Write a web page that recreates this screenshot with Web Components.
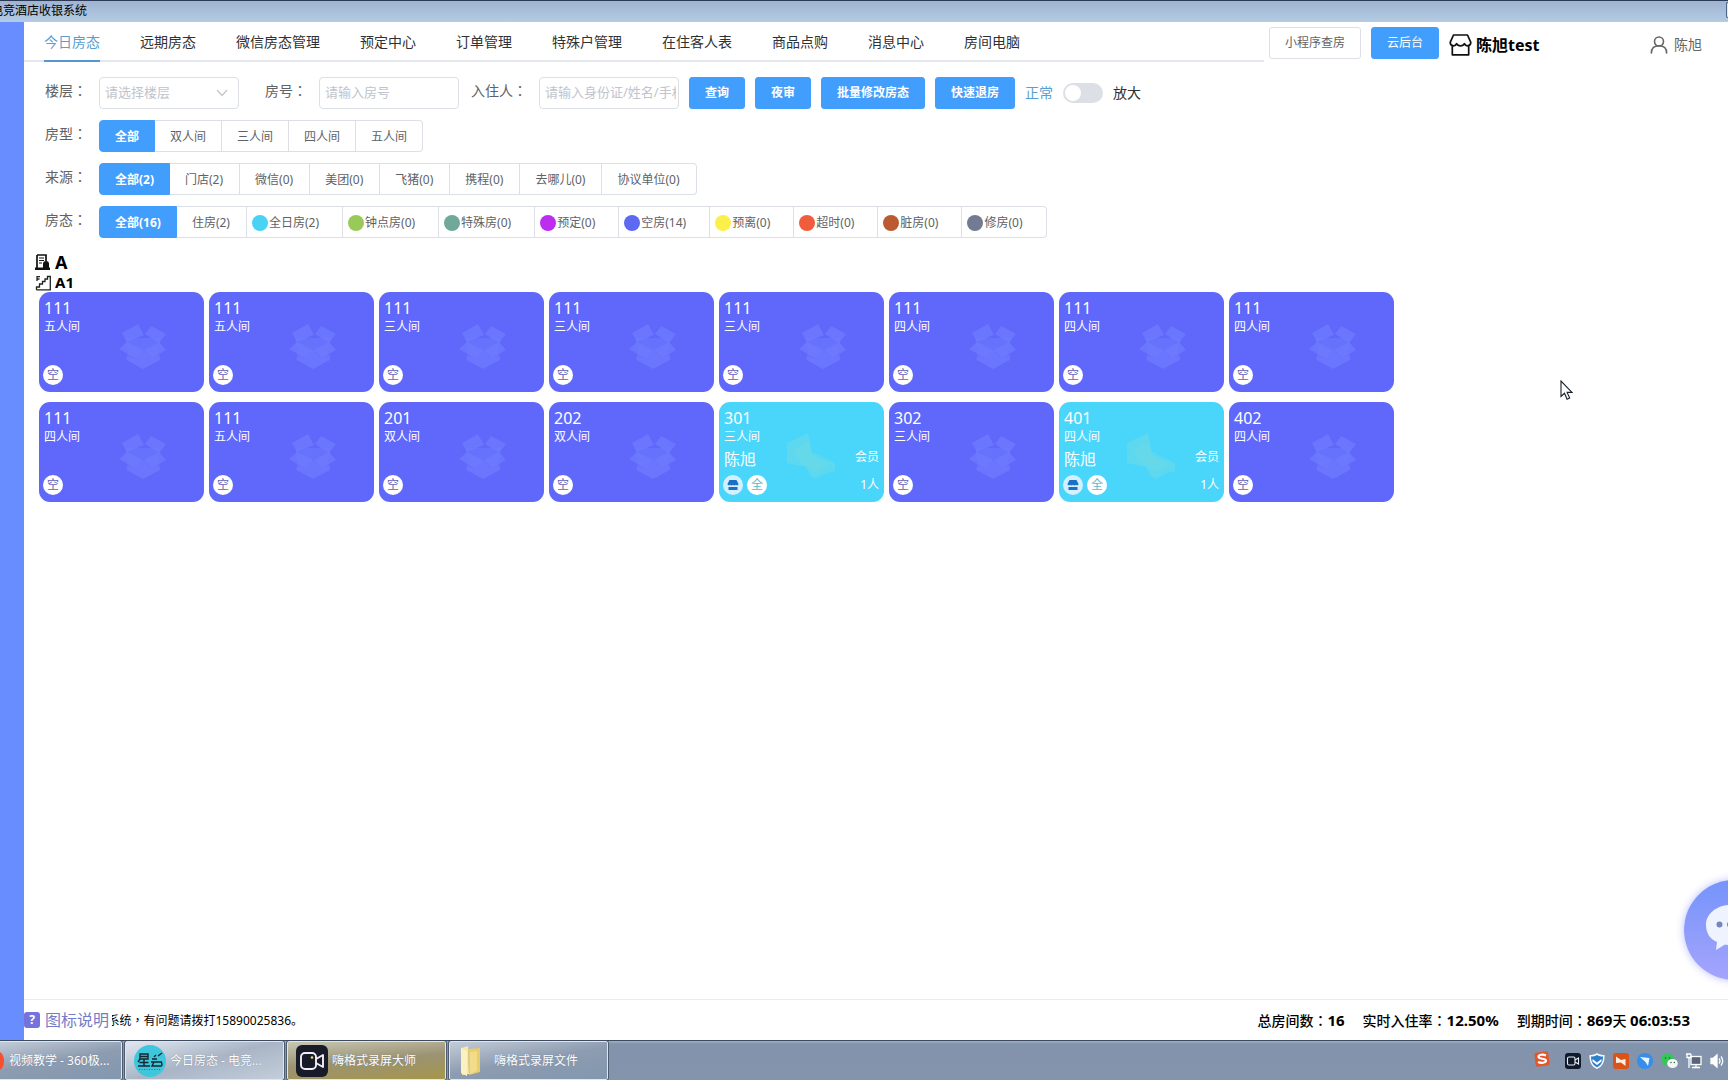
<!DOCTYPE html>
<html lang="zh-CN">
<head>
<meta charset="utf-8">
<title>电竞酒店收银系统</title>
<style>
body { margin: 0; font-family: "Noto Sans", "Noto Sans CJK SC", sans-serif; background: #fff; overflow: hidden; }
</style>
</head>
<body>
<hotel-app></hotel-app>
<script>
const define = (name, html, setup) => {
  const template = document.createElement('template');
  template.innerHTML = `<style>*{box-sizing:border-box} button,input,select{font:inherit;margin:0} a{text-decoration:none;color:inherit} svg{display:block} em{font-style:normal;font-family:"Noto Sans CJK TC",sans-serif;line-height:1}</style>` + html;
  /* Centred full-width punctuation comes from the Traditional forms */
  template.content.querySelectorAll('em').forEach(e => { e.lang = 'zh-TW'; });
  customElements.define(name, class extends HTMLElement {
    constructor() {
      super();
      this.attachShadow({ mode: 'open' }).append(template.content.cloneNode(true));
    }
    connectedCallback() { if (setup && !this.ready) { this.ready = true; setup(this, this.shadowRoot); } }
  });
};

/* Window title strip */
define('title-bar', `
<style>
:host { display: flex; justify-content: space-between; height: 22px; border-top: 1px solid #2c3a55; background: linear-gradient(#9fb3d2, #b3cce3); font-size: 12px; line-height: 20px; color: #000; overflow: hidden; flex: none; }
span { margin-left: -9px; white-space: nowrap; }
i { width: 2px; height: 16px; margin-top: 1px; border: 1px solid #4d6788; border-right: 0; background: #dceaf5; border-radius: 3px 0 0 3px; }
</style><span>电竞酒店收银系统</span><i></i>`);

/* Element-style push button */
define('ui-button', `
<style>
:host { display: inline-flex; }
button { height: 32px; border: 1px solid #429efd; border-radius: 3px; padding: 0 15px; font-size: 12px; line-height: 30px; font-weight: 700; background: #429efd; color: #fff; white-space: nowrap; }
:host([plain]) button { background: #fff; border-color: #dcdfe6; color: #606266; font-weight: 400; }
:host([light]) button { font-weight: 400; }
</style><button type="button"><slot></slot></button>`);

define('top-header', `
<style>
:host { display: flex; height: 42px; flex: none; }
nav { flex: 1; min-width: 0; height: 40px; display: flex; gap: 40px; padding-left: 20px; box-shadow: inset 0 -2px #e4e7ed; overflow: hidden; }
nav a { font-size: 14px; line-height: 40px; color: #303133; white-space: nowrap; }
nav a.on { color: #5a9fcf; box-shadow: inset 0 -2px #5596d0; }
.side { flex: 0 0 464px; display: flex; align-items: center; gap: 10px; padding: 0 26px 0 5px; }
.shop, .user { display: flex; align-items: center; padding-top: 3px; line-height: 24px; }
.shop { gap: 4px; font-size: 16px; font-weight: 700; color: #000; }
.user { gap: 6px; margin-left: auto; font-size: 14px; color: #666; }
</style>
<nav>
<a href="#" class="on">今日房态</a><a href="#">远期房态</a><a href="#">微信房态管理</a><a href="#">预定中心</a><a href="#">订单管理</a><a href="#">特殊户管理</a><a href="#">在住客人表</a><a href="#">商品点购</a><a href="#">消息中心</a><a href="#">房间电脑</a>
</nav>
<div class="side">
<ui-button plain>小程序查房</ui-button><ui-button light>云后台</ui-button>
<span class="shop"><svg width="23" height="22" viewBox="0 0 23 22" fill="none" stroke="#111" stroke-width="1.7" stroke-linejoin="round"><path d="M4.500 1h14l3.300 7.300c0 4-4.800 4.600-6.400 1.400-1.400 3-6.400 3-7.800 0C6 12.900 1.200 12.300 1.200 8.300z"/><path d="M3.300 12v8.800h16.400V12"/></svg>陈旭test</span>
<span class="user"><svg width="18" height="18" viewBox="0 0 18 18" fill="none" stroke="#666" stroke-width="1.6" stroke-linecap="round"><circle cx="9" cy="5.500" r="4.500"/><path d="M1.400 17c0-4.600 3-7.200 7.600-7.200s7.600 2.600 7.600 7.200"/></svg>陈旭</span>
</div>`);

/* Segmented radio group: options="label|dot colour, ..." */
define('radio-group', `
<style>
:host { display: inline-flex; }
div { display: flex; }
label { display: flex; align-items: center; height: 32px; padding: 2px 15px 0; border: 1px solid #dcdfe6; border-left: 0; font-size: 12px; line-height: 28px; color: #606266; background: #fff; white-space: nowrap; }
:host([counted]) label:not(:first-child) { padding-right: 16px; }
label:first-child { border-left: 1px solid #429efd; border-radius: 4px 0 0 4px; }
label:last-child { border-radius: 0 4px 4px 0; }
label:has(input:checked) { background: #429efd; border-color: #429efd; color: #fff; font-weight: 700; }
:host([counted]) label.dotted:not(:first-child) { padding: 2px 23px 0 5px; }
i { width: 16px; height: 16px; border-radius: 50%; margin-right: 1px; }
input { appearance: none; width: 0; height: 0; }
</style><div role="radiogroup"></div>`, (el, root) => {
  const box = root.querySelector('div');
  box.setAttribute('aria-label', el.getAttribute('name'));
  el.getAttribute('options').split(',').forEach((o, n) => {
    const [text, color] = o.split('|');
    box.insertAdjacentHTML('beforeend', `<label class="${color ? 'dotted' : ''}"><input type="radio" name="g"${n ? '' : ' checked'}>${color ? `<i style="background:${color}"></i>` : ''}${text}</label>`);
  });
});

define('filter-panel', `
<style>
:host { display: flex; flex-direction: column; gap: 11px; padding-top: 13px; font-size: 14px; color: #606266; flex: none; }
.row { display: flex; align-items: center; height: 32px; }
.name { width: 75px; padding-left: 21px; line-height: 28px; align-self: flex-start; white-space: nowrap; flex: none; }
.next { width: 80px; padding-right: 12px; line-height: 28px; align-self: flex-start; text-align: right; white-space: nowrap; flex: none; }
.box { width: 140px; height: 32px; border: 1px solid #dcdfe6; border-radius: 4px; padding: 0 2px 2px 5px; font-size: 13px; color: #606266; background: #fff; outline: 0; }
.box::placeholder { color: #c0c4cc; opacity: 1; }
.pick { display: grid; width: 140px; }
.pick > * { grid-area: 1 / 1; }
select.box { appearance: none; color: #c0c4cc; }
.pick svg { align-self: center; justify-self: end; margin-right: 11px; pointer-events: none; }
.acts { display: flex; align-items: center; gap: 10px; margin-left: 10px; white-space: nowrap; line-height: 28px; }
.on { color: #5a9fcf; } .off { color: #303133; }
.switch { appearance: none; width: 40px; height: 20px; border-radius: 10px; background: #dcdfe6; display: flex; align-items: center; padding: 2px; }
.switch::before { content: ""; width: 16px; height: 16px; border-radius: 50%; background: #fff; }
</style>
<div class="row">
<label class="name" for="floor">楼层<em>：</em></label>
<span class="pick"><select class="box" id="floor"><option>请选择楼层</option></select><svg width="12" height="8" viewBox="0 0 12 8" fill="none" stroke="#c0c4cc" stroke-width="1.200"><path d="M1 1l5 5.500L11 1"/></svg></span>
<label class="next" for="room">房号<em>：</em></label><input class="box" id="room" placeholder="请输入房号">
<label class="next" for="guest">入住人<em>：</em></label><input class="box" id="guest" placeholder="请输入身份证/姓名/手机号">
<div class="acts"><ui-button>查询</ui-button><ui-button>夜审</ui-button><ui-button>批量修改房态</ui-button><ui-button>快速退房</ui-button><span class="on">正常</span><input class="switch" id="zoom" type="checkbox" role="switch"><label class="off" for="zoom">放大</label></div>
</div>
<div class="row"><span class="name">房型<em>：</em></span><radio-group name="房型" options="全部,双人间,三人间,四人间,五人间"></radio-group></div>
<div class="row"><span class="name">来源<em>：</em></span><radio-group counted name="来源" options="全部(2),门店(2),微信(0),美团(0),飞猪(0),携程(0),去哪儿(0),协议单位(0)"></radio-group></div>
<div class="row"><span class="name">房态<em>：</em></span><radio-group counted name="房态" options="全部(16),住房(2),全日房(2)|#4ad2f5,钟点房(0)|#99ca59,特殊房(0)|#70a999,预定(0)|#bd2df0,空房(14)|#5e69f2,预离(0)|#fbf04a,超时(0)|#f05c3c,脏房(0)|#bb5a32,修房(0)|#727b92"></radio-group></div>`);

/* One room tile */
define('room-card', `
<style>
:host { display: block; }
article { position: relative; display: flex; flex-direction: column; height: 100px; padding: 6px 5px 7px; border-radius: 11px; background: #5f68fa; color: #fff; font-size: 12px; line-height: 18px; overflow: hidden; }
:host([guest]) article { background: #49d6fa; }
.mark { position: absolute; left: 79px; top: 30px; }
:host([guest]) .mark { left: 67px; }
.no { font-size: 16px; line-height: 20px; }
.mid { display: flex; justify-content: space-between; margin-top: 2px; line-height: 18px; }
.mid b { font-size: 16px; line-height: 22px; font-weight: 400; }
.end { display: flex; align-items: center; gap: 4px; margin: auto 0 0 -1px; height: 20px; }
.tag { display: grid; place-items: center; width: 20px; height: 20px; border-radius: 50%; background: #fff; color: #5f60b8; line-height: 20px; }
.day { color: #5fb9cc; } .src { background: #d3f0ff; }
.num { margin-left: auto; }
</style><article></article>`, (el, root) => {
  const g = el.getAttribute('guest');
  root.querySelector('article').innerHTML = (g
    ? `<svg class="mark" width="50" height="48" viewBox="0 0 50 48" fill="#5ed8ef"><path d="M1 11L22 1l4 19 23 11v8l-8 2-12 6-5-4-4-8L1 31z"/><path d="M8 17l14-7 4 14 18 8-15 8-16-11z" fill="#6bdbe6" opacity=".6"/></svg>`
    : `<svg class="mark" width="50" height="48" viewBox="0 0 50 48" fill="#6f7cff"><path d="M7 16h36l-3 14 2 8-17 9-17-9 2-8z" opacity=".45"/><path d="M4 11L20 2l6 11-17 7zM27 12l6-8 15 8-7 9z" opacity=".7"/><path d="M1 27l8-7 16 8-7 9zM26 28l15-8 7 8-14 8z" opacity=".7"/><path d="M9 34l9 3 7-9 8 8 9-3v5l-17 9-16-9z" opacity=".45"/></svg>`)
    + `<span class="no">${el.getAttribute('no')}</span><span>${el.getAttribute('type')}</span>`
    + (g ? `<div class="mid"><b>${g}</b><span>会员</span></div><div class="end"><span class="tag src"><svg width="12" height="12" viewBox="0 0 12 12" fill="#1b6fc4"><path d="M2.500 1h7L11.500 5c0 1.500-2 1.600-2.600.7-.8 1.100-2 1.100-2.900 0-.9 1.100-2.100 1.100-2.900 0C2.500 6.600.5 6.500.5 5z"/><path d="M1.500 8h9v3h-9z"/></svg></span><span class="tag day">全</span><span class="num">1人</span></div>`
         : `<div class="end"><span class="tag">空</span></div>`);
});

define('room-board', `
<style>
:host { display: block; flex: 1; min-height: 0; padding: 13px 0 0 11px; color: #000; }
h2, h3 { display: flex; align-items: center; gap: 4px; margin: 0; font-weight: 700; }
h2 { font-size: 18px; line-height: 22px; } h3 { font-size: 15px; line-height: 19px; }
.grid { display: grid; grid-template-columns: repeat(auto-fill, 165px); gap: 10px 5px; width: 82%; margin-left: 4px; }
</style>
<h2><svg width="16" height="16" viewBox="0 0 16 16"><path d="M2 1h9v6M2 1v13" fill="none" stroke="#111" stroke-width="1.700"/><path d="M4 4h5M4 6.500h5M4 9h3" stroke="#111" stroke-width="1.200"/><path d="M0 13.500h15V16H0z" fill="#111"/><path d="M8 14v-4a3 3 0 0 1 6 0v4z" fill="#111"/></svg>A</h2>
<h3><svg width="16" height="16" viewBox="0 0 16 16" fill="none" stroke="#222" stroke-width="1.300"><path d="M1.500 15V12H4.500V9H7.500V6.500H10V4H12.500V1.500H15.300V14.800H1.500"/><path d="M2 6V1.700H5M2 4h2.500"/></svg>A1</h3>
<div class="grid"></div>`, (el, root) => {
  root.querySelector('.grid').innerHTML = [
    ['111', '五'], ['111', '五'], ['111', '三'], ['111', '三'], ['111', '三'], ['111', '四'], ['111', '四'], ['111', '四'],
    ['111', '四'], ['111', '五'], ['201', '双'], ['202', '双'], ['301', '三', '陈旭'], ['302', '三'], ['401', '四', '陈旭'], ['402', '四']
  ].map(([no, t, g]) => `<room-card no="${no}" type="${t}人间"${g ? ` guest="${g}"` : ''}></room-card>`).join('');
});

define('status-footer', `
<style>
:host { display: flex; align-items: center; height: 41px; flex: none; border-top: 1px solid #ebebee; padding-right: 38px; white-space: nowrap; color: #000; }
a { display: flex; align-items: center; gap: 5px; color: #737cc8; font-size: 16px; line-height: 24px; }
.q { width: 16px; height: 16px; border-radius: 3px; background: #7472dc; color: #fff; font-size: 12px; line-height: 16px; text-align: center; font-weight: 700; }
.run { display: flex; justify-content: flex-end; width: 191px; margin-left: 3px; overflow: hidden; font-size: 12px; line-height: 24px; padding-top: 2px; }
.sum { display: flex; gap: 18px; margin-left: auto; font-size: 14px; line-height: 24px; font-weight: 500; }
.sum b { font-size: 15px; }
</style>
<a href="#"><span class="q">?</span>图标说明</a>
<span class="run"><span>系统<em>，</em>有问题请拨打15890025836。</span></span>
<div class="sum"><span>总房间数<em>：</em><b>16</b></span><span>实时入住率<em>：</em><b>12.50%</b></span><span>到期时间<em>：</em><b>869</b>天 <b>06:03:53</b></span></div>`);

define('chat-bubble', `
<style>
:host { position: absolute; right: -56px; bottom: 100px; }
button { display: block; width: 100px; height: 100px; padding: 0; border: 0; border-radius: 50%; background: linear-gradient(#7594fb, #a5a4fc); box-shadow: 0 0 8px #b8bffc; }
</style><button type="button" aria-label="客服"><svg width="100" height="100" viewBox="0 0 100 100"><path d="M46 25c14 0 25 9 25 20S60 65 46 65c-2 0-4 0-5-.4L32 70l1-8c-7-3-11-9-11-17 0-11 11-20 24-20z" fill="#eef3ff"/><g fill="#7585bd"><circle cx="35.500" cy="44.500" r="3"/><circle cx="46" cy="44.500" r="3"/><circle cx="56.500" cy="44.500" r="3"/></g></svg></button>`);

define('task-button', `
<style>
:host { display: block; flex: none; width: 159px; }
button { display: flex; align-items: center; gap: 4px; width: 100%; height: 39px; padding: 0 8px; border: 1px solid #dfe6ee; border-radius: 2px; outline: 1px solid #4d5c6e; outline-offset: 0; background: linear-gradient(170deg, #c3ccd8, #8d9cb1 50%, #8297ae); color: #fff; font-size: 12px; line-height: 20px; text-align: left; white-space: nowrap; text-shadow: 0 0 1px #6b7a8c; }
:host([on]) button { background: linear-gradient(165deg, #dfe6ef, #a9b5c6 50%, #c3cddb); }
:host([gold]) button { background: linear-gradient(175deg, #c8c6b4, #9b9372 50%, #a5964c); }
:host([cut]) { width: 127px; margin-left: -5px; }
:host([cut]) button { gap: 5px; padding-left: 0; }
:host([file]) button { gap: 9px; }
</style><button type="button"><slot name="icon"></slot><slot></slot></button>`);

define('task-bar', `
<style>
:host { display: flex; align-items: flex-start; gap: 3px; height: 40px; flex: none; padding-right: 3px; border-top: 1px solid #3d4b60; background: linear-gradient(#a2b0c3, #8293ac 3px, #8394ab); overflow: hidden; }
.tray { display: flex; align-items: center; gap: 8px; margin-left: auto; height: 39px; }
.sogou { margin: 0 7px 4px 0; }
</style>
<task-button cut><svg slot="icon" width="8" height="32" viewBox="0 0 8 32"><path d="M0 6c5 0 8 4 8 10s-3 10-8 10z" fill="#f4512f"/></svg>视频教学 - 360极...</task-button>
<task-button on><svg slot="icon" width="32" height="32" viewBox="0 0 32 32"><circle cx="16" cy="16" r="16" fill="#3ec7dc"/><g fill="none" stroke="#15262f" stroke-width="1.400"><path d="M6 9h8v5H6zM6 11.500h8M10 14v7M5.500 17.500h9M4 21h12M6 14l-2 3"/><path d="M18 14h5M24 11l4-3M17 17h11M20 17l-2 4h8c3 0 2-3 1-4M20 12l2-2"/></g><path d="M5 24.500h22" stroke="#28788a" stroke-dasharray="1 1.500"/></svg>今日房态 - 电竞...</task-button>
<task-button gold><svg slot="icon" width="32" height="32" viewBox="0 0 32 32"><rect width="32" height="32" rx="6" fill="#171c28"/><g fill="none" stroke="#f1ecf8" stroke-width="1.900"><rect x="5" y="8" width="15" height="16" rx="4"/><path d="M20 14l7-4v12l-7-4" stroke-linejoin="round"/></g><circle cx="16" cy="12.500" r="1.300" fill="#f3d469"/></svg>嗨格式录屏大师</task-button>
<task-button file><svg slot="icon" width="27" height="32" viewBox="0 0 27 32"><path d="M3 3l7-2 1 28-7 1z" fill="#f7e9a4"/><path d="M10 4l12-1v24l-11 3z" fill="#e9cc6b"/><path d="M3 3l6 3v25l-6-3z" fill="#fbf2bf"/><path d="M12 7l7-1v20l-7 3z" fill="#f2dc8a"/></svg>嗨格式录屏文件</task-button>
<div class="tray">
<svg class="sogou" width="16" height="16" viewBox="0 0 16 16"><rect x="1" y="1" width="14" height="14" rx="2" fill="#e2562c" transform="rotate(-8 8 8)"/><path d="M12 4.500C9 3 4.500 3.500 4.500 5.800c0 2.700 7.500 1.200 7.500 3.800 0 2.500-5 2.800-8 1.400" fill="none" stroke="#fff" stroke-width="2.200"/></svg>
<svg width="16" height="16" viewBox="0 0 16 16"><rect width="16" height="16" rx="3" fill="#111a2b"/><g fill="none" stroke="#e8edf5" stroke-width="1.100"><rect x="2.500" y="4" width="7.500" height="8" rx="1.500"/><path d="M10 7l3.500-2v6L10 9"/></g></svg>
<svg width="16" height="16" viewBox="0 0 16 16"><path d="M8 0c2 1.500 5 2 7.500 2C16 9 13 14 8 16 3 14 0 9 .5 2 3 2 6 1.500 8 0z" fill="#f5faff"/><path d="M8 2c1.700 1 4 1.500 6 1.500C14 9 12 12.500 8 14.200 4 12.500 2 9 2 3.500 4 3.500 6.300 3 8 2z" fill="#2c7fc9"/><path d="M3.500 6L8 9.500 12.500 6v2.500L8 12 3.500 8.500z" fill="#fff"/></svg>
<svg width="16" height="16" viewBox="0 0 16 16"><rect width="16" height="16" rx="3" fill="#dc5318"/><path d="M3 3.500l5 3.500 4.500-1v7L8 9.500 3 10z" fill="#fff1e5"/></svg>
<svg width="16" height="16" viewBox="0 0 16 16"><circle cx="8" cy="8" r="8" fill="#348eea"/><path d="M3 4l9.500 1L11 13 8.500 9z" fill="#e9f5ff"/></svg>
<svg width="17" height="16" viewBox="0 0 17 16"><ellipse cx="6.500" cy="6" rx="6.500" ry="5.500" fill="#35c65a"/><path d="M2 9v4l4-2z" fill="#35c65a"/><ellipse cx="11.500" cy="10.500" rx="5.300" ry="4.500" fill="#f2f7f1"/><g fill="#315943"><circle cx="4.500" cy="5" r=".8"/><circle cx="8.500" cy="5" r=".8"/><circle cx="10" cy="9.500" r=".7"/><circle cx="13.300" cy="9.500" r=".7"/></g></svg>
<svg width="16" height="16" viewBox="0 0 16 16" fill="none" stroke="#fff" stroke-width="1.300"><rect x="5" y="3.500" width="10" height="8" fill="#56677b"/><path d="M10 11.500V14M6 14.500h8M1 1v3.500h4V1M3 4.500V15M0 1h5"/></svg>
<svg width="15" height="16" viewBox="0 0 15 16" fill="none" stroke="#fff" stroke-width="1.300"><path d="M1 5.500h2L7 2v12L3 10.500H1z" fill="#fff"/><path d="M9 5.500q2 2.500 0 5M11 3.500q3.500 4.500 0 9"/></svg>
</div>`);

define('hotel-app', `
<style>
:host { position: relative; display: flex; flex-direction: column; height: 100vh; overflow: hidden; }
.body { flex: 1; min-height: 0; display: flex; }
aside { width: 24px; background: #688dff; flex: none; }
main { flex: 1; min-width: 0; display: flex; flex-direction: column; }
.cursor { position: absolute; left: 1560px; top: 380px; }
</style>
<title-bar></title-bar>
<div class="body"><aside></aside><main>
<top-header></top-header><filter-panel></filter-panel><room-board></room-board><status-footer></status-footer>
</main></div>
<task-bar></task-bar>
<chat-bubble></chat-bubble>
<svg class="cursor" width="14" height="21" viewBox="0 0 14 21" fill="#fff" stroke="#1a1e2b" stroke-width="1.100"><path d="M1 1v15.500l3.500-3.200 2.600 6 2.600-1.200-2.600-5.700H12z"/></svg>`);
</script>
</body>
</html>
